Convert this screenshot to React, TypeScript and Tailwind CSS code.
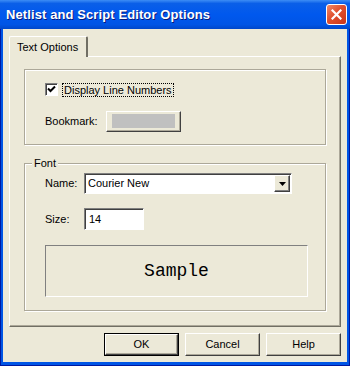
import React from "react";

const ui = { fontFamily: '"Liberation Sans", Arial, sans-serif' };

function RaisedButton({ children, isDefault = false, className = "" }: { children?: React.ReactNode; isDefault?: boolean; className?: string }) {
  const inner = (
    <div className="h-full w-full border border-t-white border-l-white border-r-[#404040] border-b-[#404040] shadow-[inset_-1px_-1px_0_#aca899] bg-[#ECE9D8] flex items-center justify-center text-[11px] text-black">
      {children}
    </div>
  );
  if (isDefault) {
    return <div className={`border border-black ${className}`}>{inner}</div>;
  }
  return <div className={className}>{inner}</div>;
}

function Group({ children, className = "" }: { children: React.ReactNode; className?: string }) {
  return (
    <div className={`relative border border-[#aca899] shadow-[inset_1px_1px_0_#fff,1px_1px_0_#fff] ${className}`}>
      {children}
    </div>
  );
}

export default function App() {
  return (
    <div className="w-[350px] h-[366px] flex flex-col bg-[#0055E5] border-x border-b border-[#0019a0]" style={ui}>
      {/* title bar */}
      <div className="h-[29px] shrink-0 flex items-center justify-between pl-[6px] pr-[3px] bg-[linear-gradient(to_bottom,#3d8df5_0%,#0a5fe8_12%,#0058ee_50%,#0055e5_85%,#0047c9_100%)] -mx-px">
        <span className="text-white font-bold text-[13px] tracking-[0.1px] [text-shadow:1px_1px_0_#0a1a7a]">
          Netlist and Script Editor Options
        </span>
        <div className="w-[21px] h-[21px] rounded-[3px] border border-white bg-[linear-gradient(135deg,#f08a6a_0%,#e0502e_45%,#c8341a_100%)] flex items-center justify-center">
          <svg width="11" height="11" viewBox="0 0 11 11">
            <path d="M1.5 1.5 L9.5 9.5 M9.5 1.5 L1.5 9.5" stroke="#fff" strokeWidth="2.2" strokeLinecap="square" />
          </svg>
        </div>
      </div>

      {/* body */}
      <div className="flex-1 mx-[2px] mb-[3px] bg-[#ECE9D8] pt-[7px] px-[6px] flex flex-col">
        {/* tab */}
        <div className="flex">
          <div className="relative z-10 -mb-px h-[21px] w-[79px] bg-[#ECE9D8] border-t border-l border-white border-r-2 border-r-[#716f64] rounded-t-[2px] flex items-center pl-[7px] text-[11px] text-black">
            Text Options
          </div>
        </div>

        {/* panel */}
        <div className="h-[271px] border-t border-l border-white border-r border-b border-r-[#716f64] border-b-[#716f64] shadow-[inset_-1px_-1px_0_#aca899] pt-[12px] pl-[14px]">
          <Group className="w-[302px] h-[76px] pt-[12px] pl-[20px]">
            <div className="flex items-center h-[15px]">
              <div className="w-[13px] h-[13px] border border-t-[#808080] border-l-[#808080] border-r-white border-b-white shadow-[inset_1px_1px_0_#404040] bg-white flex items-center justify-center">
                <svg width="9" height="9" viewBox="0 0 9 9">
                  <path d="M1 3.5 L3.5 6 L8 1.5" stroke="#000" strokeWidth="2" fill="none" />
                </svg>
              </div>
              <span className="ml-[4px] border border-dotted border-black px-px leading-[12px] text-[11px] text-black">
                Display Line Numbers
              </span>
            </div>
            <div className="flex items-center mt-[14px]">
              <span className="text-[11px] text-black w-[61px]">Bookmark:</span>
              <div className="w-[75px] h-[21px] border border-t-white border-l-white border-r-[#404040] border-b-[#404040] shadow-[inset_-1px_-1px_0_#aca899] flex pt-[2px] pl-[5px]">
                <div className="w-[63px] h-[14px] bg-[#c0c0c0]" />
              </div>
            </div>
          </Group>

          <Group className="w-[302px] h-[148px] mt-[18px] pt-[9px] pl-[20px]">
            <span className="absolute -top-[8px] left-[7px] px-[2px] bg-[#ECE9D8] text-[11px] text-black leading-[14px]">
              Font
            </span>
            <div className="flex items-center">
              <span className="text-[11px] text-black w-[39px]">Name:</span>
              <div className="w-[208px] h-[21px] border border-t-[#808080] border-l-[#808080] border-r-white border-b-white shadow-[inset_1px_1px_0_#404040] bg-white flex items-center pl-[3px] pr-px">
                <span className="flex-1 text-[11px] text-black">Courier New</span>
                <div className="w-[16px] h-[17px] border border-t-white border-l-white border-r-[#404040] border-b-[#404040] shadow-[inset_-1px_-1px_0_#808080] bg-[#ECE9D8] flex items-center justify-center">
                  <svg width="7" height="4" viewBox="0 0 7 4">
                    <path d="M0 0 H7 L3.5 4 Z" fill="#000" />
                  </svg>
                </div>
              </div>
            </div>
            <div className="flex items-center mt-[14px]">
              <span className="text-[11px] text-black w-[39px]">Size:</span>
              <div className="w-[60px] h-[22px] border border-t-[#808080] border-l-[#808080] border-r-white border-b-white shadow-[inset_1px_1px_0_#404040] bg-white flex items-center pl-[4px]">
                <span className="text-[11px] text-black">14</span>
              </div>
            </div>
            <div className="mt-[15px] w-[263px] h-[52px] border border-t-[#808080] border-l-[#808080] border-r-white border-b-white flex items-center justify-center">
              <span className="text-[18px] text-black" style={{ fontFamily: '"Liberation Mono", "Courier New", monospace' }}>
                Sample
              </span>
            </div>
          </Group>
        </div>

        {/* buttons */}
        <div className="flex justify-end gap-[6px] mt-[6px]">
          <RaisedButton isDefault className="w-[75px] h-[23px]">OK</RaisedButton>
          <RaisedButton className="w-[75px] h-[23px]">Cancel</RaisedButton>
          <RaisedButton className="w-[75px] h-[23px]">Help</RaisedButton>
        </div>
      </div>
    </div>
  );
}
